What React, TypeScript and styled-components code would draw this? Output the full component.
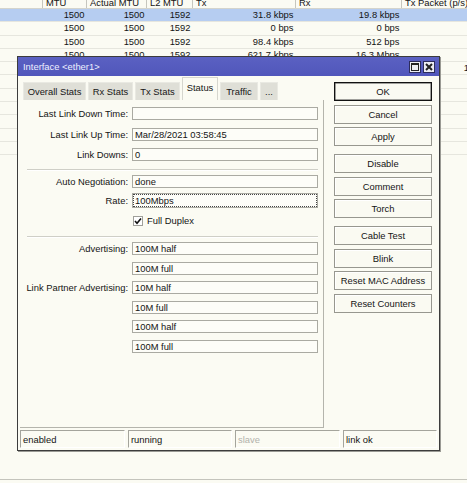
import React from 'react';
import styled, { createGlobalStyle } from 'styled-components';

const GlobalStyle = createGlobalStyle`
  html, body { margin: 0; padding: 0; background: #fbfbf3; }
  body {
    font-family: "Liberation Sans", Arial, sans-serif;
    font-size: 9.4px;
    color: #141414;
  }
  * { box-sizing: border-box; }
`;

const COLS = '43px 44px 60px 46px 103px 106px 80px';

const Desktop = styled.div`
  position: relative;
  width: 467px;
  height: 483px;
  overflow: hidden;
  background: #fbfbf3;
  display: flex;
  flex-direction: column;
`;

const List = styled.div`
  flex: 1;
  display: flex;
  flex-direction: column;
  margin-top: -6px;
`;

const HeaderRow = styled.div`
  display: grid;
  grid-template-columns: ${COLS};
  height: 15px;
  border-bottom: 1px solid #d4d4cc;
`;

const HeaderCell = styled.div`
  border-right: 1px solid #c6c6be;
  padding: 2px 0 0 3px;
  line-height: 13px;
  white-space: nowrap;
  overflow: hidden;
`;

const Row = styled.div<{ $selected?: boolean }>`
  display: grid;
  grid-template-columns: ${COLS};
  height: 13.3px;
  border-bottom: 1px solid #e6e6de;
  background: ${p => (p.$selected ? '#b6cdf1' : 'transparent')};
`;

const Cell = styled.div`
  text-align: right;
  padding-right: 2.5px;
  line-height: 12.3px;
  white-space: pre;
`;

const ListFooter = styled.div`
  height: 4px;
  border-top: 1px solid #c4c4bc;
`;

const Window = styled.div`
  position: absolute;
  left: 17px;
  top: 56px;
  width: 423px;
  height: 395px;
  border: 1px solid #3c3c3c;
  box-shadow: 1px 1px 0 #9a9a94;
  background: #fbfbf3;
  display: flex;
  flex-direction: column;
`;

const TitleBar = styled.div`
  height: 19px;
  display: flex;
  align-items: center;
  padding: 0 4px 0 5px;
  background: linear-gradient(to bottom, #5b61c2, #5056bb);
  color: #eef0ff;
`;

const TitleText = styled.div`
  flex: 1;
`;

const TitleButtons = styled.div`
  display: flex;
  gap: 2px;
`;

const TitleButton = styled.div`
  width: 12px;
  height: 12px;
  background: #ecedf4;
  border: 1px solid #2c2c5c;
  display: flex;
  align-items: center;
  justify-content: center;
`;

const Body = styled.div`
  height: 352px;
  display: flex;
  padding: 1px 7px 0 2px;
  gap: 10px;
`;

const LeftCol = styled.div`
  width: 304px;
  display: flex;
  flex-direction: column;
`;

const TabBar = styled.div`
  height: 23px;
  display: flex;
  align-items: flex-end;
  gap: 2px;
  padding-left: 3px;
`;

const Tab = styled.div<{ $w: number; $active?: boolean }>`
  width: ${p => p.$w}px;
  height: ${p => (p.$active ? 23 : 18)}px;
  display: flex;
  align-items: center;
  justify-content: center;
  white-space: nowrap;
  padding-bottom: ${p => (p.$active ? 4 : 0)}px;
  background: ${p => (p.$active ? '#fbfbf3' : '#dfdfd7')};
  border: 1px solid ${p => (p.$active ? '#d6d6ce' : '#e9e9e2')};
  border-bottom: none;
  color: #161616;
`;

const Panel = styled.div`
  flex: 1;
  border-right: 1px solid #b4b4ac;
  border-bottom: 1px solid #b4b4ac;
  padding: 7px 5px 0 0;
  display: flex;
  flex-direction: column;
`;

const FieldGrid = styled.div<{ $gap: number }>`
  display: grid;
  grid-template-columns: 108px 186px;
  column-gap: 4px;
  row-gap: ${p => p.$gap}px;
  align-items: center;
`;

const Label = styled.div`
  grid-column: 1;
  text-align: right;
  white-space: nowrap;
`;

const Field = styled.div<{ $h?: number; $focused?: boolean }>`
  grid-column: 2;
  height: ${p => p.$h ?? 13}px;
  border: 1px solid #aaaaa2;
  background: #fdfdf8;
  padding-left: 2px;
  display: flex;
  align-items: center;
  white-space: nowrap;
  outline: ${p => (p.$focused ? '1px dotted #444' : 'none')};
  outline-offset: -2px;
`;

const Separator = styled.div`
  height: 1px;
  margin: 8px 0 5px 7px;
  background: #cfcfc7;
  box-shadow: 0 1px 0 #ffffff;
`;

const CheckRow = styled.div`
  grid-column: 2;
  height: 15px;
  display: flex;
  align-items: center;
  gap: 4px;
  padding-left: 1px;
`;

const CheckBox = styled.div`
  width: 10px;
  height: 10px;
  border: 1px solid #a0a09a;
  background: #fff;
  display: flex;
  align-items: center;
  justify-content: center;
`;

const ButtonCol = styled.div`
  width: 98px;
  padding-top: 5px;
  display: flex;
  flex-direction: column;
  gap: 8px;
`;

const ButtonGroup = styled.div`
  display: flex;
  flex-direction: column;
  gap: 3.5px;
`;

const Button = styled.div<{ $default?: boolean }>`
  height: 19px;
  display: flex;
  align-items: center;
  justify-content: center;
  white-space: nowrap;
  background: #fafaf2;
  border: 1px solid ${p => (p.$default ? '#111' : '#97978f')};
  box-shadow: ${p => (p.$default ? 'inset 0 0 0 0.5px #444' : 'inset 1px 1px 0 #ffffff')};
`;

const StatusBar = styled.div`
  height: 18px;
  margin-top: 2px;
  display: flex;
  gap: 3px;
  padding: 0 2px;
`;

const StatusCell = styled.div<{ $w?: number; $dim?: boolean }>`
  ${p => (p.$w ? `width: ${p.$w}px;` : 'flex: 1;')}
  border-top: 1px solid #a4a49c;
  border-left: 1px solid #a4a49c;
  border-right: 1px solid #ffffff;
  border-bottom: 1px solid #ffffff;
  padding-left: 2px;
  display: flex;
  align-items: center;
  color: ${p => (p.$dim ? '#b2b2ac' : '#141414')};
`;

type ListRow = string[];
const blank: ListRow = ['', '', '', '', '', '', ''];
const rows: ListRow[] = [
  ['', '1500', '1500', '1592', '31.8 kbps', '19.8 kbps', ''],
  ['', '1500', '1500', '1592', '0 bps', '0 bps', ''],
  ['', '1500', '1500', '1592', '98.4 kbps', '512 bps', ''],
  ['', '1500', '1500', '1592', '621.7 kbps', '16.3 Mbps', ''],
  ['', '', '', '', '', '', '12  '],
  blank,
  blank,
  blank,
  blank,
  blank,
  blank,
];

const headers = ['', 'MTU', 'Actual MTU', 'L2 MTU', 'Tx', 'Rx', 'Tx Packet (p/s)'];

const tabs: { label: string; w: number; active?: boolean }[] = [
  { label: 'Overall Stats', w: 63 },
  { label: 'Rx Stats', w: 45 },
  { label: 'Tx Stats', w: 45 },
  { label: 'Status', w: 36, active: true },
  { label: 'Traffic', w: 38 },
  { label: '...', w: 18 },
];

export default function App() {
  return (
    <>
      <GlobalStyle />
      <Desktop>
        <List>
          <HeaderRow>
            {headers.map((h, i) => (
              <HeaderCell key={i}>{h}</HeaderCell>
            ))}
          </HeaderRow>
          {rows.map((r, i) => (
            <Row key={i} $selected={i === 0}>
              {r.map((c, j) => (
                <Cell key={j}>{c}</Cell>
              ))}
            </Row>
          ))}
        </List>
        <ListFooter />

        <Window>
          <TitleBar>
            <TitleText>Interface &lt;ether1&gt;</TitleText>
            <TitleButtons>
              <TitleButton>
                <svg width="8" height="8" viewBox="0 0 8 8">
                  <rect x="0.5" y="0.5" width="7" height="7" fill="none" stroke="#222" strokeWidth="1" />
                  <rect x="0" y="0" width="8" height="2" fill="#222" />
                </svg>
              </TitleButton>
              <TitleButton>
                <svg width="8" height="8" viewBox="0 0 8 8">
                  <path d="M1 1 L7 7 M7 1 L1 7" stroke="#222" strokeWidth="2" />
                </svg>
              </TitleButton>
            </TitleButtons>
          </TitleBar>

          <Body>
            <LeftCol>
              <TabBar>
                {tabs.map(t => (
                  <Tab key={t.label} $w={t.w} $active={t.active}>
                    {t.label}
                  </Tab>
                ))}
              </TabBar>
              <Panel>
                <FieldGrid $gap={7.5}>
                  <Label>Last Link Down Time:</Label>
                  <Field />
                  <Label>Last Link Up Time:</Label>
                  <Field>Mar/28/2021 03:58:45</Field>
                  <Label>Link Downs:</Label>
                  <Field>0</Field>
                </FieldGrid>
                <Separator />
                <FieldGrid $gap={5}>
                  <Label>Auto Negotiation:</Label>
                  <Field>done</Field>
                  <Label>Rate:</Label>
                  <Field $h={15} $focused>100Mbps</Field>
                  <CheckRow>
                    <CheckBox>
                      <svg width="8" height="8" viewBox="0 0 8 8">
                        <path d="M1 4 L3 6.2 L7 1.5" fill="none" stroke="#111" strokeWidth="1.6" />
                      </svg>
                    </CheckBox>
                    Full Duplex
                  </CheckRow>
                </FieldGrid>
                <Separator />
                <FieldGrid $gap={6.5}>
                  <Label>Advertising:</Label>
                  <Field>100M half</Field>
                  <Field>100M full</Field>
                  <Label>Link Partner Advertising:</Label>
                  <Field>10M half</Field>
                  <Field>10M full</Field>
                  <Field>100M half</Field>
                  <Field>100M full</Field>
                </FieldGrid>
              </Panel>
            </LeftCol>

            <ButtonCol>
              <ButtonGroup>
                <Button $default>OK</Button>
                <Button>Cancel</Button>
                <Button>Apply</Button>
              </ButtonGroup>
              <ButtonGroup>
                <Button>Disable</Button>
                <Button>Comment</Button>
                <Button>Torch</Button>
              </ButtonGroup>
              <ButtonGroup>
                <Button>Cable Test</Button>
                <Button>Blink</Button>
                <Button>Reset MAC Address</Button>
                <Button>Reset Counters</Button>
              </ButtonGroup>
            </ButtonCol>
          </Body>

          <StatusBar>
            <StatusCell $w={105}>enabled</StatusCell>
            <StatusCell $w={104}>running</StatusCell>
            <StatusCell $w={105} $dim>slave</StatusCell>
            <StatusCell>link ok</StatusCell>
          </StatusBar>
        </Window>
      </Desktop>
    </>
  );
}
